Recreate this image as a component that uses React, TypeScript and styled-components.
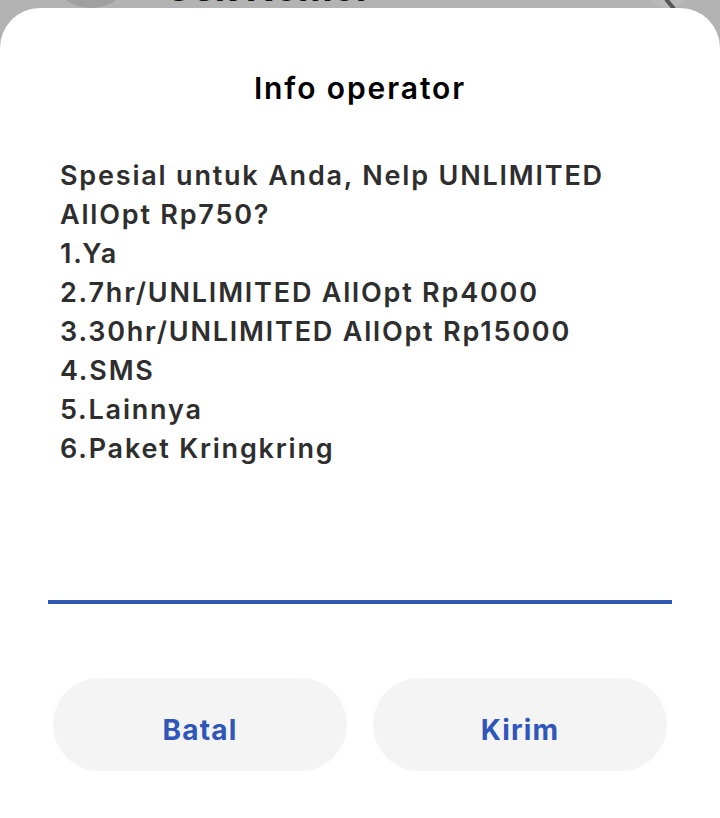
import styled, { createGlobalStyle } from "styled-components";

const GlobalStyle = createGlobalStyle`
  html, body {
    margin: 0;
    padding: 0;
    background: #b3b3b3;
  }

  body {
    font-family: Inter, "Noto Sans", sans-serif;
  }
`;

const Screen = styled.div`
  width: 720px;
  height: 818px;
  display: flex;
  flex-direction: column;
  overflow: hidden;
  background: #b3b3b3;
`;

// the page under the sheet, only a sliver of it shows at the top
const BehindBar = styled.div`
  position: relative;
  height: 8px;
  flex-shrink: 0;
  overflow: hidden;
`;

const BehindAvatar = styled.div`
  position: absolute;
  left: 47px;
  top: -80px;
  width: 88px;
  height: 88px;
  border-radius: 50%;
  background: #a0a0a0;

  &::after {
    content: "";
    position: absolute;
    left: 33px;
    top: 46px;
    width: 22px;
    height: 22px;
    border-radius: 50%;
    background: #b8b8b8;
  }
`;

const BehindTitle = styled.div`
  position: absolute;
  left: 164px;
  bottom: 2px;
  font-size: 38px;
  font-weight: 700;
  line-height: 1;
  color: #111;
`;

const BehindAction = styled.div`
  position: absolute;
  left: 648px;
  top: -30px;
  width: 40px;
  height: 38px;
  border-radius: 50%;
  background: #bababa;

  &::after {
    content: "";
    position: absolute;
    left: 20px;
    top: 27px;
    width: 4px;
    height: 14px;
    border-radius: 2px;
    background: #555;
    transform: rotate(-40deg);
  }
`;

const Sheet = styled.div`
  flex: 1;
  display: flex;
  flex-direction: column;
  background: #fff;
  border-radius: 40px 40px 0 0;
  padding-top: 62px;
`;

const Title = styled.h2`
  margin: 0;
  text-align: center;
  font-size: 30px;
  font-weight: 600;
  line-height: 36px;
  letter-spacing: 1.9px;
  color: #000;
`;

const Message = styled.div`
  margin-top: 50px;
  padding: 0 60px;
  font-size: 27px;
  font-weight: 600;
  line-height: 39px;
  letter-spacing: 1.8px;
  color: #2e2e2e;
  height: 312px;
`;

const InputLine = styled.div`
  margin: 132px 48px 0;
  height: 4px;
  background: #3057b1;
`;

const Actions = styled.div`
  display: grid;
  grid-template-columns: 1fr 1fr;
  gap: 26px;
  margin-top: 74px;
  padding: 0 53px;
`;

const ActionButton = styled.button`
  height: 93px;
  border: none;
  border-radius: 47px;
  background: #f4f4f4;
  font-family: inherit;
  font-size: 28px;
  font-weight: 700;
  letter-spacing: 1.2px;
  color: #2f56b8;
  padding-top: 12px;
`;

const lines = [
  "Spesial untuk Anda, Nelp UNLIMITED",
  "AllOpt Rp750?",
  "1.Ya",
  "2.7hr/UNLIMITED AllOpt Rp4000",
  "3.30hr/UNLIMITED AllOpt Rp15000",
  "4.SMS",
  "5.Lainnya",
  "6.Paket Kringkring",
];

export default function App() {
  return (
    <Screen>
      <GlobalStyle />
      <BehindBar>
        <BehindAvatar />
        <BehindTitle>Cek Nomor</BehindTitle>
        <BehindAction />
      </BehindBar>
      <Sheet>
        <Title>Info operator</Title>
        <Message>
          {lines.map((line) => (
            <div key={line}>{line}</div>
          ))}
        </Message>
        <InputLine />
        <Actions>
          <ActionButton>Batal</ActionButton>
          <ActionButton>Kirim</ActionButton>
        </Actions>
      </Sheet>
    </Screen>
  );
}
